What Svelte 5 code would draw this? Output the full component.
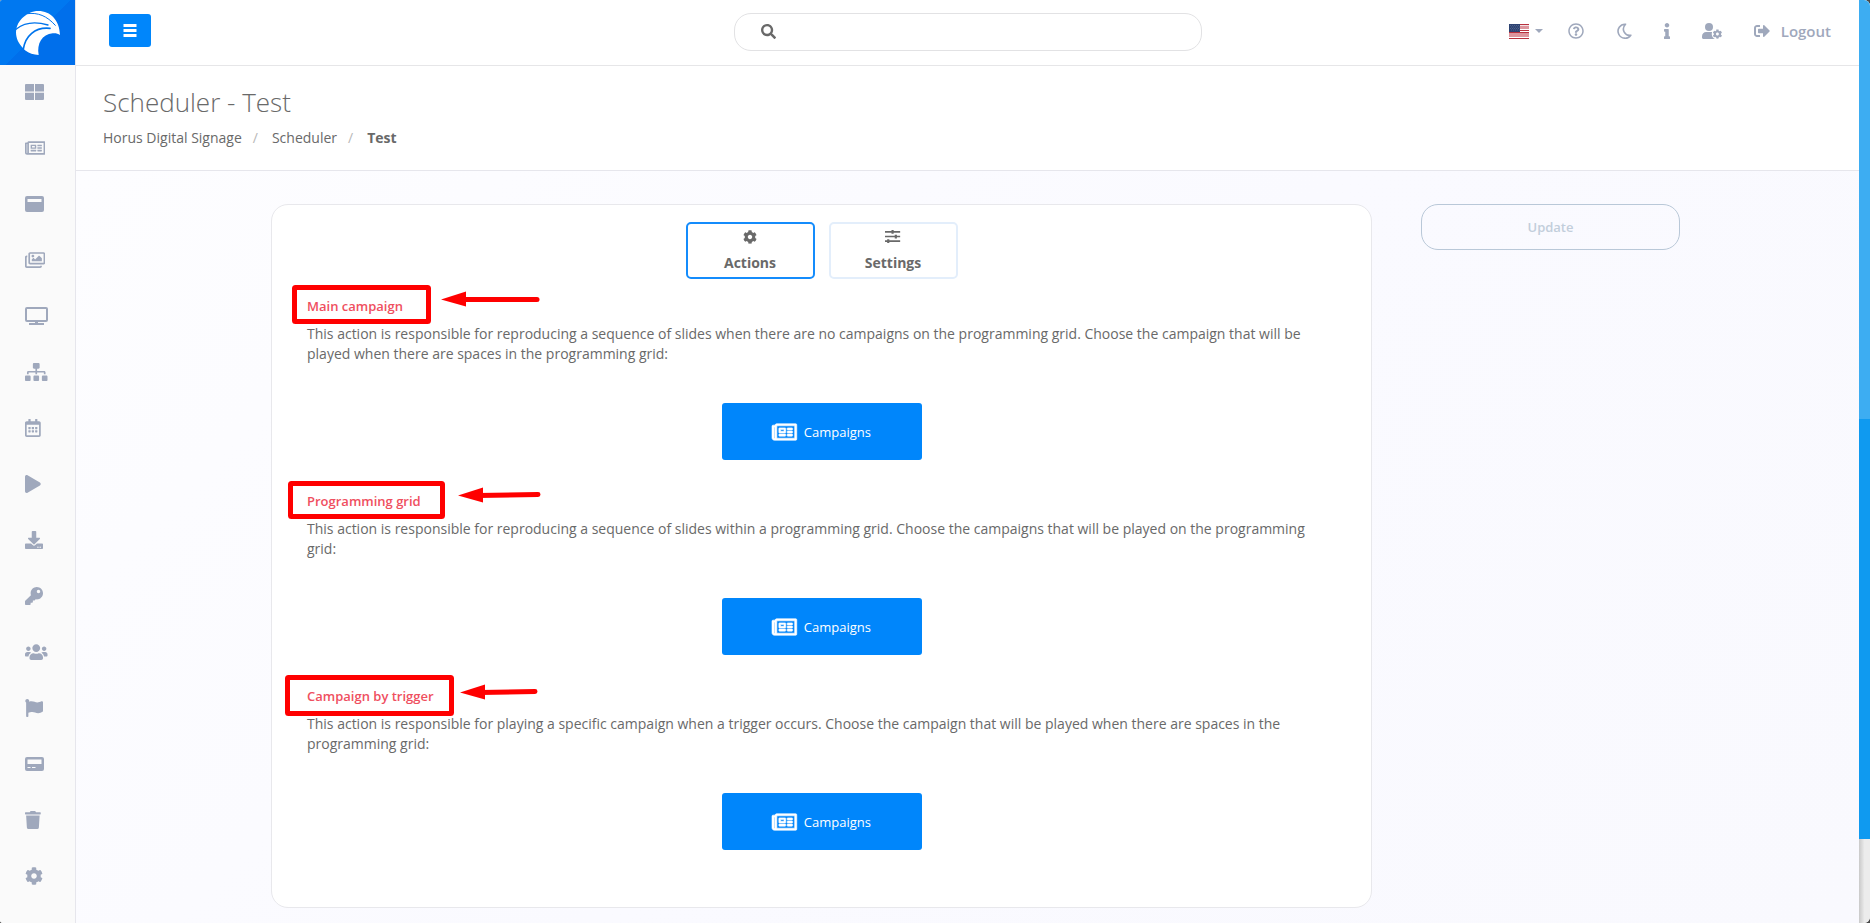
<script lang="ts">
	type Icon = { w: number; h: number; d: string };
	type Mark = { x: number; y: number; w: number; h: number; tip: [number, number]; end: [number, number] };

	// Glyph outlines, each drawn in its own w x h box
	const icons: Record<string, Icon> = {
		grid: {
			w: 19,
			h: 16,
			d: 'M1 0h8v7.500H0V1a1 1 0 0 1 1-1zM10 0h8a1 1 0 0 1 1 1v6.500h-9zM0 8.700h9V16H1a1 1 0 0 1-1-1zM10 8.700h9V15a1 1 0 0 1-1 1h-8z'
		},
		newspaper: {
			w: 576,
			h: 512,
			d: 'M552 64H112c-20.858 0-38.643 13.377-45.248 32H24c-13.255 0-24 10.745-24 24v272c0 30.928 25.072 56 56 56h496c13.255 0 24-10.745 24-24V88c0-13.255-10.745-24-24-24zM48 392V144h16v248c0 4.411-3.589 8-8 8s-8-3.589-8-8zm480 8H111.422c.374-2.614.578-5.283.578-8V112h416v288zM172 280h136c6.627 0 12-5.373 12-12v-96c0-6.627-5.373-12-12-12H172c-6.627 0-12 5.373-12 12v96c0 6.627 5.373 12 12 12zm28-80h80v40h-80v-40zm-40 140v-24c0-6.627 5.373-12 12-12h136c6.627 0 12 5.373 12 12v24c0 6.627-5.373 12-12 12H172c-6.627 0-12-5.373-12-12zm192 0v-24c0-6.627 5.373-12 12-12h104c6.627 0 12 5.373 12 12v24c0 6.627-5.373 12-12 12H364c-6.627 0-12-5.373-12-12zm0-144v-24c0-6.627 5.373-12 12-12h104c6.627 0 12 5.373 12 12v24c0 6.627-5.373 12-12 12H364c-6.627 0-12-5.373-12-12zm0 72v-24c0-6.627 5.373-12 12-12h104c6.627 0 12 5.373 12 12v24c0 6.627-5.373 12-12 12H364c-6.627 0-12-5.373-12-12z'
		},
		panel: {
			w: 19,
			h: 16,
			d: 'M2 0h15a2 2 0 0 1 2 2v12a2 2 0 0 1-2 2H2a2 2 0 0 1-2-2V2a2 2 0 0 1 2-2zM2.500 3v3h14V3z'
		},
		images: {
			w: 576,
			h: 512,
			d: 'M480 416v16c0 26.510-21.490 48-48 48H48c-26.510 0-48-21.490-48-48V176c0-26.510 21.490-48 48-48h16v48H54a6 6 0 0 0-6 6v244a6 6 0 0 0 6 6h372a6 6 0 0 0 6-6v-10h48zm42-336H150a6 6 0 0 0-6 6v244a6 6 0 0 0 6 6h372a6 6 0 0 0 6-6V86a6 6 0 0 0-6-6zm6-48c26.510 0 48 21.490 48 48v256c0 26.510-21.490 48-48 48H144c-26.510 0-48-21.490-48-48V80c0-26.510 21.490-48 48-48h384zM264 144c0 22.091-17.909 40-40 40s-40-17.909-40-40 17.909-40 40-40 40 17.909 40 40zm-72 96l39.515-39.515c4.686-4.686 12.284-4.686 16.971 0L288 240l103.515-103.515c4.686-4.686 12.284-4.686 16.971 0L480 208v80H192v-48z'
		},
		desktop: {
			w: 23,
			h: 18,
			d: 'M2 0h19a2 2 0 0 1 2 2v11a2 2 0 0 1-2 2h-8v1h6v2H4v-2h6v-1H2a2 2 0 0 1-2-2V2a2 2 0 0 1 2-2zM2 2v11h19V2z'
		},
		sitemap: {
			w: 640,
			h: 512,
			d: 'M128 352H32c-17.670 0-32 14.330-32 32v96c0 17.670 14.330 32 32 32h96c17.670 0 32-14.330 32-32v-96c0-17.670-14.330-32-32-32zm-24-80h192v48h48v-48h192v48h48v-57.590c0-21.170-17.230-38.410-38.410-38.410H344v-64h40c17.670 0 32-14.330 32-32V32c0-17.670-14.330-32-32-32H256c-17.670 0-32 14.330-32 32v96c0 17.670 14.330 32 32 32h40v64H94.410C73.230 224 56 241.230 56 262.410V320h48v-48zm264 80h-96c-17.670 0-32 14.330-32 32v96c0 17.670 14.330 32 32 32h96c17.670 0 32-14.330 32-32v-96c0-17.670-14.330-32-32-32zm240 0h-96c-17.670 0-32 14.330-32 32v96c0 17.670 14.330 32 32 32h96c17.670 0 32-14.330 32-32v-96c0-17.670-14.330-32-32-32z'
		},
		calendar: {
			w: 448,
			h: 512,
			d: 'M148 288h-40c-6.600 0-12-5.400-12-12v-40c0-6.600 5.400-12 12-12h40c6.600 0 12 5.400 12 12v40c0 6.600-5.400 12-12 12zm108-12v-40c0-6.600-5.400-12-12-12h-40c-6.600 0-12 5.400-12 12v40c0 6.600 5.400 12 12 12h40c6.600 0 12-5.400 12-12zm96 0v-40c0-6.600-5.400-12-12-12h-40c-6.600 0-12 5.400-12 12v40c0 6.600 5.400 12 12 12h40c6.600 0 12-5.400 12-12zm-96 96v-40c0-6.600-5.400-12-12-12h-40c-6.600 0-12 5.400-12 12v40c0 6.600 5.400 12 12 12h40c6.600 0 12-5.400 12-12zm-96 0v-40c0-6.600-5.400-12-12-12h-40c-6.600 0-12 5.400-12 12v40c0 6.600 5.400 12 12 12h40c6.600 0 12-5.400 12-12zm192 0v-40c0-6.600-5.400-12-12-12h-40c-6.600 0-12 5.400-12 12v40c0 6.600 5.400 12 12 12h40c6.600 0 12-5.400 12-12zm96-260v352c0 26.500-21.500 48-48 48H48c-26.500 0-48-21.500-48-48V112c0-26.500 21.500-48 48-48h48V12c0-6.600 5.400-12 12-12h40c6.600 0 12 5.400 12 12v52h128V12c0-6.600 5.400-12 12-12h40c6.600 0 12 5.400 12 12v52h48c26.500 0 48 21.500 48 48zm-48 346V160H48v298c0 3.300 2.700 6 6 6h340c3.300 0 6-2.700 6-6z'
		},
		play: {
			w: 448,
			h: 512,
			d: 'M424.400 214.700L72.400 6.600C43.800-10.300 0 6.100 0 47.900V464c0 37.500 40.700 60.100 72.400 41.300l352-208c31.400-18.500 31.500-64.100 0-82.600z'
		},
		download: {
			w: 512,
			h: 512,
			d: 'M216 0h80c13.300 0 24 10.700 24 24v168h87.700c17.800 0 26.700 21.500 14.100 34.100L269.700 378.300c-7.500 7.500-19.800 7.500-27.300 0L90.100 226.100c-12.600-12.600-3.700-34.100 14.100-34.100H192V24c0-13.300 10.700-24 24-24zm296 376v112c0 13.300-10.700 24-24 24H24c-13.300 0-24-10.700-24-24V376c0-13.300 10.700-24 24-24h146.700l49 49c20.100 20.100 52.500 20.100 72.600 0l49-49H488c13.300 0 24 10.700 24 24zm-124 88c0-11-9-20-20-20s-20 9-20 20 9 20 20 20 20-9 20-20zm64 0c0-11-9-20-20-20s-20 9-20 20 9 20 20 20 20-9 20-20z'
		},
		key: {
			w: 512,
			h: 512,
			d: 'M512 176c0 97.200-78.800 176-176 176-11.220 0-22.190-1.060-32.830-3.070l-24.010 27.010A24 24 0 0 1 261.220 384H224v40c0 13.255-10.745 24-24 24h-40v40c0 13.255-10.745 24-24 24H24c-13.255 0-24-10.745-24-24v-78.060c0-6.365 2.529-12.470 7.029-16.970l161.802-161.800C163.108 213.814 160 195.271 160 176 160 78.798 238.797 0 336 0c97.490 0 176 78.510 176 176zM336 128c0 26.510 21.490 48 48 48s48-21.490 48-48-21.490-48-48-48-48 21.490-48 48z'
		},
		users: {
			w: 640,
			h: 512,
			d: 'M96 224c35.300 0 64-28.700 64-64s-28.700-64-64-64-64 28.700-64 64 28.700 64 64 64zm448 0c35.300 0 64-28.700 64-64s-28.700-64-64-64-64 28.700-64 64 28.700 64 64 64zm32 32h-64c-17.600 0-33.500 7.100-45.100 18.600 40.300 22.100 68.900 62 75.100 109.400h66c17.700 0 32-14.300 32-32v-32c0-35.300-28.700-64-64-64zm-256 0c61.900 0 112-50.100 112-112S381.900 32 320 32 208 82.100 208 144s50.100 112 112 112zm76.800 32h-8.300c-20.800 10-43.900 16-68.500 16s-47.600-6-68.500-16h-8.300C179.600 288 128 339.600 128 403.200V432c0 26.500 21.500 48 48 48h288c26.500 0 48-21.500 48-48v-28.800c0-63.600-51.600-115.200-115.200-115.200zm-223.700-13.400C161.500 263.100 145.600 256 128 256H64c-35.300 0-64 28.700-64 64v32c0 17.700 14.300 32 32 32h65.900c6.300-47.400 34.900-87.300 75.200-109.400z'
		},
		flag: {
			w: 512,
			h: 512,
			d: 'M349.565 98.783C295.978 98.783 251.721 64 184.348 64c-24.955 0-47.309 4.384-68.045 12.013a55.947 55.947 0 0 0 3.586-23.562C118.117 24.015 94.806 1.206 66.338.048 34.345-1.254 8 24.296 8 56c0 19.026 9.497 35.825 24 45.945V488c0 13.255 10.745 24 24 24h16c13.255 0 24-10.745 24-24v-94.400c28.311-12.064 63.582-22.122 114.435-22.122 53.588 0 97.844 34.783 165.217 34.783 48.169 0 86.667-16.294 122.505-40.858C506.840 359.452 512 349.571 512 339.045v-243.100c0-23.393-24.269-38.870-45.485-29.016-34.338 15.948-76.454 31.854-116.950 31.854z'
		},
		device: {
			w: 19,
			h: 14,
			d: 'M2 0h15a2 2 0 0 1 2 2v10a2 2 0 0 1-2 2H2a2 2 0 0 1-2-2V2a2 2 0 0 1 2-2zM2.500 2.500v4.500h14V2.500zM2.500 10v1h3v-1zM7 10v1h3.500v-1z'
		},
		trash: {
			w: 448,
			h: 512,
			d: 'M432 32H312l-9.400-18.700A24 24 0 0 0 281.100 0H166.800a23.720 23.720 0 0 0-21.400 13.300L136 32H16A16 16 0 0 0 0 48v32a16 16 0 0 0 16 16h416a16 16 0 0 0 16-16V48a16 16 0 0 0-16-16zM53.200 467a48 48 0 0 0 47.900 45h245.800a48 48 0 0 0 47.900-45L416 128H32z'
		},
		cog: {
			w: 512,
			h: 512,
			d: 'M487.400 315.700l-42.600-24.600c4.300-23.200 4.300-47 0-70.200l42.600-24.600c4.900-2.800 7.100-8.600 5.500-14-11.100-35.600-30-67.800-54.700-94.600-3.800-4.100-10-5.100-14.800-2.300L380.800 110c-17.900-15.400-38.500-27.300-60.800-35.100V25.800c0-5.600-3.900-10.500-9.400-11.700-36.700-8.200-74.300-7.800-109.200 0-5.500 1.200-9.400 6.100-9.400 11.700V75c-22.200 7.900-42.800 19.800-60.800 35.100L88.700 85.500c-4.900-2.800-11-1.900-14.800 2.300-24.700 26.700-43.600 58.900-54.700 94.600-1.700 5.400.6 11.200 5.500 14L67.300 221c-4.300 23.200-4.300 47 0 70.200l-42.600 24.600c-4.900 2.800-7.100 8.600-5.500 14 11.100 35.600 30 67.800 54.700 94.600 3.800 4.100 10 5.100 14.800 2.300l42.600-24.600c17.900 15.400 38.500 27.300 60.800 35.100v49.200c0 5.600 3.900 10.500 9.400 11.700 36.700 8.200 74.300 7.800 109.200 0 5.500-1.200 9.400-6.100 9.400-11.700v-49.200c22.200-7.900 42.800-19.800 60.800-35.100l42.600 24.600c4.900 2.800 11 1.900 14.800-2.300 24.700-26.700 43.600-58.900 54.700-94.600 1.500-5.500-.7-11.300-5.600-14.100zM256 336c-44.100 0-80-35.900-80-80s35.900-80 80-80 80 35.900 80 80-35.900 80-80 80z'
		},
		search: {
			w: 512,
			h: 512,
			d: 'M505 442.700L405.300 343c-4.500-4.500-10.600-7-17-7H372c27.600-35.300 44-79.700 44-128C416 93.100 322.900 0 208 0S0 93.100 0 208s93.100 208 208 208c48.300 0 92.700-16.400 128-44v16.300c0 6.400 2.500 12.500 7 17l99.700 99.700c9.400 9.400 24.600 9.400 33.900 0l28.300-28.300c9.400-9.400 9.400-24.600.1-34zM208 336c-70.700 0-128-57.200-128-128 0-70.700 57.200-128 128-128 70.700 0 128 57.200 128 128 0 70.700-57.200 128-128 128z'
		},
		help: {
			w: 512,
			h: 512,
			d: 'M256 8C119.043 8 8 119.083 8 256c0 136.997 111.043 248 248 248s248-111.003 248-248C504 119.083 392.957 8 256 8zm0 448c-110.532 0-200-89.431-200-200 0-110.495 89.472-200 200-200 110.491 0 200 89.471 200 200 0 110.530-89.431 200-200 200zm107.244-255.200c0 67.052-72.421 68.084-72.421 92.863V300c0 6.627-5.373 12-12 12h-45.647c-6.627 0-12-5.373-12-12v-8.659c0-35.745 27.100-50.034 47.579-61.516 17.561-9.845 28.324-16.541 28.324-29.579 0-17.246-21.999-28.693-39.784-28.693-23.189 0-33.894 10.977-48.942 29.969-4.057 5.120-11.460 6.071-16.666 2.124l-27.824-21.098c-5.107-3.872-6.251-11.066-2.644-16.363C184.846 131.491 214.940 112 261.794 112c49.071 0 101.450 38.304 101.450 88.800zM298 368c0 23.159-18.841 42-42 42s-42-18.841-42-42 18.841-42 42-42 42 18.841 42 42z'
		},
		info: {
			w: 192,
			h: 512,
			d: 'M20 424.229h20V279.771H20c-11.046 0-20-8.954-20-20V212c0-11.046 8.954-20 20-20h112c11.046 0 20 8.954 20 20v212.229h20c11.046 0 20 8.954 20 20V492c0 11.046-8.954 20-20 20H20c-11.046 0-20-8.954-20-20v-47.771c0-11.046 8.954-20 20-20zM96 0C56.235 0 24 32.235 24 72s32.235 72 72 72 72-32.235 72-72S135.764 0 96 0z'
		},
		logout: {
			w: 512,
			h: 512,
			d: 'M497 273L329 441c-15 15-41 4.500-41-17v-96H152c-13.300 0-24-10.700-24-24v-96c0-13.300 10.700-24 24-24h136V88c0-21.400 25.900-32 41-17l168 168c9.300 9.400 9.300 24.600 0 34zM192 436v-40c0-6.600-5.400-12-12-12H96c-17.700 0-32-14.300-32-32V160c0-17.700 14.300-32 32-32h84c6.600 0 12-5.400 12-12V76c0-6.600-5.400-12-12-12H96c-53 0-96 43-96 96v192c0 53 43 96 96 96h84c6.600 0 12-5.400 12-12z'
		},
		bars: {
			w: 14,
			h: 13,
			d: 'M.5 0h13v3H.5zM.5 5h13v3H.5zM.5 10h13v3H.5z'
		},
		sliders: {
			w: 14,
			h: 12,
			d: 'M0 1h6V0h2v1h6v1.500H8v1H6v-1H0zM0 5.300h9v-1h2v1h3v1.500h-3v1H9v-1H0zM0 9.500h2v-1h2v1h10V11H4v1H2v-1H0z'
		}
	};

	const nav = [
		{ icon: 'grid', label: 'Dashboard', size: 16 },
		{ icon: 'newspaper', label: 'Campaigns', size: 18 },
		{ icon: 'panel', label: 'Templates', size: 16 },
		{ icon: 'images', label: 'Media', size: 18 },
		{ icon: 'desktop', label: 'Screens', size: 18 },
		{ icon: 'sitemap', label: 'Groups', size: 18 },
		{ icon: 'calendar', label: 'Scheduler', size: 18 },
		{ icon: 'play', label: 'Player', size: 18 },
		{ icon: 'download', label: 'Downloads', size: 18 },
		{ icon: 'key', label: 'Licenses', size: 18 },
		{ icon: 'users', label: 'Users', size: 18 },
		{ icon: 'flag', label: 'Reports', size: 18 },
		{ icon: 'device', label: 'Devices', size: 14 },
		{ icon: 'trash', label: 'Trash', size: 18 },
		{ icon: 'cog', label: 'Configuration', size: 18 }
	];

	const sections: { title: string; text: string; mark: Mark }[] = [
		{
			title: 'Main campaign',
			text: 'This action is responsible for reproducing a sequence of slides when there are no campaigns on the programming grid. Choose the campaign that will be played when there are spaces in the programming grid:',
			mark: { x: 11, y: 7, w: 134, h: 34, tip: [158, 19], end: [254, 19] }
		},
		{
			title: 'Programming grid',
			text: 'This action is responsible for reproducing a sequence of slides within a programming grid. Choose the campaigns that will be played on the programming grid:',
			mark: { x: 7, y: 8, w: 152, h: 33, tip: [175, 20], end: [255, 19] }
		},
		{
			title: 'Campaign by trigger',
			text: 'This action is responsible for playing a specific campaign when a trigger occurs. Choose the campaign that will be played when there are spaces in the programming grid:',
			mark: { x: 4, y: 7, w: 164, h: 36, tip: [177, 22], end: [252, 21] }
		}
	];

	let tab = $state('actions');
	let query = $state('');
</script>

{#snippet glyph(name: string, size: number)}
	{@const i = icons[name]}
	<svg viewBox="0 0 {i.w} {i.h}" height={size} width={(i.w / i.h) * size} fill="currentColor" aria-hidden="true">
		<path d={i.d} fill-rule="evenodd" />
	</svg>
{/snippet}

<div class="window">
	<aside class="sidebar">
		<a class="logo" href="#home" aria-label="Horus Digital Signage">
			<svg viewBox="0 0 132 132" width="44" height="44" aria-hidden="true">
				<path
					fill="#fff"
					d="M132 72C131 28 104 0 67 0 58 0 49 2 42 5 18 16 0 38 0 64c0 18 8 34 20 46l7 8c12 9 26 14 41 14-6-34 10-62 42-65 9-1 16 1 22 5z"
				/>
				<g fill="none" stroke="#0074ec" stroke-linecap="round">
					<path d="M0 55C30 30 66 33 96 42" stroke-width="4" />
					<path d="M22 114C28 76 56 47 102 52" stroke-width="5" />
					<path d="M34 8C66 4 92 14 118 43" stroke-width="3" />
				</g>
			</svg>
		</a>
		<nav aria-label="Main">
			{#each nav as item}
				<a href="#{item.icon}" aria-label={item.label}>{@render glyph(item.icon, item.size)}</a>
			{/each}
		</nav>
	</aside>

	<div class="page">
		<header class="topbar">
			<button class="toggle" aria-label="Toggle menu">{@render glyph('bars', 13)}</button>

			<label class="search">
				{@render glyph('search', 15)}
				<input type="search" aria-label="Search" bind:value={query} />
			</label>

			<div class="tools">
				<button class="lang" aria-label="Language">
					<svg viewBox="0 0 20 15" width="20" height="15" aria-hidden="true">
						<path fill="#f3dfe2" d="M0 0h20v15H0z" />
						<path fill="#b8313e" d="M0 0h20v1H0zM0 14h20v1H0zM11 6h9v1h-9zM0 8h20v1H0z" />
						<path fill="#dd959d" d="M11 2h9v3h-9zM0 9h20v4H0z" />
						<path fill="#fff" d="M11 5h9v1h-9zM0 7h20v1H0zM0 13h20v1H0z" />
						<path fill="#2d4372" d="M0 0h11v8H0z" />
						<path stroke="#8391b0" stroke-width=".6" stroke-dasharray=".7 1.300" d="M1 1.500h10M2 3h9M1 4.500h10M2 6h9" />
					</svg>
					<svg viewBox="0 0 8 4" width="8" height="4" fill="currentColor" aria-hidden="true">
						<path d="M0 0h8L4 4z" />
					</svg>
				</button>
				<button class="tool" aria-label="Help">{@render glyph('help', 16)}</button>
				<button class="tool" aria-label="Dark mode">
					<svg viewBox="0 0 16 16" width="16" height="16" fill="none" stroke="currentColor" stroke-width="1.600" stroke-linejoin="round" aria-hidden="true">
						<path d="M9.500 1.200A7 7 0 1 0 14.800 12.200C9.200 13.300 4.600 6.500 9.500 1.200z" />
					</svg>
				</button>
				<button class="tool" aria-label="Information">{@render glyph('info', 16)}</button>
				<button class="tool" aria-label="Account settings">
					<svg viewBox="0 0 640 512" width="20" height="16" fill="currentColor" aria-hidden="true">
						<circle cx="224" cy="128" r="128" />
						<path d="M134 288h180c70 0 134 60 134 134v90H48c-26 0-48-21-48-48v-42c0-74 60-134 134-134z" />
						<circle cx="490" cy="350" r="180" fill="#fff" />
						<g transform="translate(340 200) scale(.6)">
							<path d={icons.cog.d} fill-rule="evenodd" />
						</g>
					</svg>
				</button>
				<a class="logout" href="#logout">{@render glyph('logout', 16)}<span>Logout</span></a>
			</div>
		</header>

		<section class="heading">
			<h1>Scheduler - Test</h1>
			<ol class="breadcrumb">
				<li><a href="#home">Horus Digital Signage</a></li>
				<li><a href="#scheduler">Scheduler</a></li>
				<li aria-current="page">Test</li>
			</ol>
		</section>

		<main class="content">
			<div class="card">
				<div class="tabs" role="tablist">
					<button role="tab" aria-selected={tab === 'actions'} class:active={tab === 'actions'} onclick={() => (tab = 'actions')}>
						{@render glyph('cog', 14)}
						Actions
					</button>
					<button role="tab" aria-selected={tab === 'settings'} class:active={tab === 'settings'} onclick={() => (tab = 'settings')}>
						{@render glyph('sliders', 13)}
						Settings
					</button>
				</div>

				{#each sections as s}
					{@const m = s.mark}
					<section class="action">
						<h2>{s.title}</h2>
						<p>{s.text}</p>
						<button class="campaigns">{@render glyph('newspaper', 22)}Campaigns</button>
						<svg class="mark" width="280" height="60" aria-hidden="true">
							<rect x={m.x + 0.5} y={m.y + 0.5} width={m.w} height={m.h} rx="1" />
							<path class="shaft" d="M{m.tip[0] + 20} {m.tip[1] + 0.5}L{m.end[0]} {m.end[1] + 0.5}" />
							<path class="head" d="M{m.tip[0]} {m.tip[1] + 0.5}l25-8v15z" />
						</svg>
					</section>
				{/each}
			</div>

			<div class="side">
				<button class="update" disabled>Update</button>
			</div>
		</main>
	</div>

	<div class="scroll" aria-hidden="true">
		<div class="thumb"></div>
	</div>
</div>

<style>
	:global(body) {
		margin: 0;
		background: #4a4a4a;
	}

	.window {
		display: flex;
		min-height: 100vh;
		overflow: hidden;
		border-radius: 2px 6px 6px 3px;
		background: #fff;
		color: #696969;
		font-family: 'Open Sans', 'Noto Sans', sans-serif;
		font-size: 14px;
		line-height: 20px;
	}

	svg {
		display: block;
		flex-shrink: 0;
	}

	a {
		color: inherit;
		text-decoration: none;
	}

	button {
		padding: 0;
		border: none;
		background: none;
		color: inherit;
		font: inherit;
		cursor: pointer;
	}

	.sidebar {
		flex: 0 0 75px;
		border-right: 1px solid #e6e6ec;
		background: #fafafa;
		color: #9fa8bc;
	}
	.logo {
		display: flex;
		align-items: center;
		justify-content: center;
		height: 65px;
		background: linear-gradient(135deg, #0078f0 50%, #006feb 50%);
	}
	.sidebar nav a {
		display: flex;
		align-items: center;
		box-sizing: border-box;
		height: 56px;
		padding: 0 0 2px 25px;
	}

	.page {
		flex: 1;
		display: flex;
		flex-direction: column;
		min-width: 0;
	}

	.topbar {
		display: grid;
		grid-template-columns: 1fr minmax(200px, 468px) 1fr;
		height: 65px;
		border-bottom: 1px solid #e6e6e8;
		color: #9fa8bc;
	}
	.toggle {
		display: flex;
		align-items: center;
		justify-content: center;
		width: 42px;
		height: 33px;
		margin: 14px 0 0 33px;
		border-radius: 3px;
		background: #0086fb;
		color: #fff;
	}
	.search {
		display: flex;
		align-items: center;
		gap: 12px;
		box-sizing: border-box;
		height: 38px;
		margin-top: 13px;
		padding: 0 26px 2px;
		border: 1px solid #e2e2e4;
		border-radius: 17px;
		color: #696969;
	}
	.search input {
		flex: 1;
		min-width: 0;
		border: none;
		outline: none;
		background: none;
		color: inherit;
		font: inherit;
	}
	.tools {
		display: flex;
		align-items: center;
		justify-content: flex-end;
		height: 62px;
		padding-right: 28px;
	}
	.tool {
		margin-right: 32px;
	}
	.lang {
		display: flex;
		align-items: center;
		gap: 6px;
		margin-right: 25px;
	}
	.logout {
		display: flex;
		align-items: center;
		gap: 11px;
		font-size: 15px;
		font-weight: 600;
	}

	.heading {
		box-sizing: border-box;
		height: 105px;
		padding: 19px 27px 0;
		border-bottom: 1px solid #e6e6ec;
	}
	h1 {
		margin: 0;
		font-size: 26px;
		font-weight: 300;
		line-height: 34px;
	}
	.breadcrumb {
		display: flex;
		margin: 9px 0 0;
		padding: 0;
		list-style: none;
	}
	.breadcrumb li + li::before {
		content: '/';
		padding: 0 14px 0 11px;
		color: #b8b8b8;
		font-weight: 400;
	}
	.breadcrumb li[aria-current] {
		font-weight: 700;
	}

	.content {
		flex: 1;
		display: grid;
		grid-template-columns: minmax(0, 1101fr) 259fr;
		gap: 49px;
		align-items: start;
		padding: 33px 179px 15px 195px;
		background: linear-gradient(135deg, #fdfdff, #fafaff 50%, #f9f9fe);
	}
	.card {
		padding: 17px 35px 57px;
		border: 1px solid #e8e8ec;
		border-radius: 17px;
		background: #fff;
	}

	.tabs {
		display: flex;
		justify-content: center;
		gap: 14px;
		margin-bottom: 17px;
	}
	.tabs button {
		display: flex;
		flex-direction: column;
		align-items: center;
		justify-content: space-between;
		box-sizing: border-box;
		width: 129px;
		height: 57px;
		padding: 6px 0 4px;
		border: 2px solid #e3eefb;
		border-radius: 5px;
		font-weight: 700;
	}
	.tabs button.active {
		border-color: #148cfc;
	}

	.action {
		position: relative;
	}
	.action + .action {
		margin-top: 31px;
	}
	h2 {
		margin: 0 0 8px;
		color: #ef4f60;
		font-size: 13px;
		font-weight: 600;
		line-height: 20px;
	}
	p {
		margin: 0 0 39px;
	}
	.campaigns {
		display: flex;
		align-items: center;
		justify-content: center;
		gap: 7px;
		width: 200px;
		height: 57px;
		margin: 0 auto;
		border-radius: 3px;
		background: #0086fb;
		color: #fff;
		font-size: 13px;
	}
	.campaigns :global(svg) {
		stroke: currentColor;
		stroke-width: 14;
		overflow: visible;
	}

	/* Callout box and arrow over the section title */
	.mark {
		position: absolute;
		top: -16px;
		left: -24px;
		pointer-events: none;
	}
	.mark rect,
	.mark .shaft {
		fill: none;
		stroke: #f00;
		stroke-width: 5;
		stroke-linecap: round;
		stroke-linejoin: round;
	}
	.mark .head {
		fill: #f00;
	}

	.update {
		width: 100%;
		height: 46px;
		border: 1px solid #b9c8d8;
		border-radius: 17px;
		color: #c2cedb;
		font-size: 13px;
		font-weight: 600;
		cursor: default;
	}

	.scroll {
		flex: 0 0 11px;
		background: linear-gradient(90deg, #c9c9c9, #ececec 50%);
	}
	.thumb {
		height: 839px;
		max-height: 91%;
		background: linear-gradient(#3dadf2 50%, #0f9af0 50%);
	}
</style>
